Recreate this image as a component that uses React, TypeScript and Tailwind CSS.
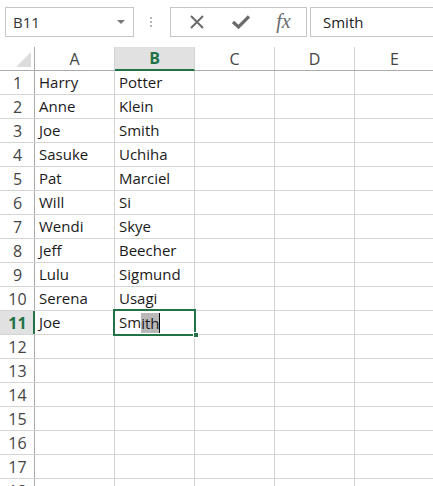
import React from 'react'

const rows: [string, string][] = [
  ['Harry', 'Potter'],
  ['Anne', 'Klein'],
  ['Joe', 'Smith'],
  ['Sasuke', 'Uchiha'],
  ['Pat', 'Marciel'],
  ['Will', 'Si'],
  ['Wendi', 'Skye'],
  ['Jeff', 'Beecher'],
  ['Lulu', 'Sigmund'],
  ['Serena', 'Usagi'],
  ['Joe', 'Smith'],
  ['', ''],
  ['', ''],
  ['', ''],
  ['', ''],
  ['', ''],
  ['', ''],
  ['', ''],
]

const cols = ['A', 'B', 'C', 'D', 'E']

export default function App() {
  return (
    <main
      className="w-[433px] h-[486px] overflow-hidden bg-white text-[15px] text-[#222]"
      style={{ fontFamily: '"Open Sans", "Noto Sans", sans-serif' }}
    >
      {/* Formula bar */}
      <div className="flex h-[47px] pt-[7px] pl-[5px]">
        <div className="flex items-center justify-between w-[129px] h-[30px] border border-[#c6c6c6] pl-[7px] pr-[8px]">
          <span className="text-[#333]">B11</span>
          <svg width="8" height="5" viewBox="0 0 8 5">
            <path d="M0 0 L8 0 L4 4 Z" fill="#7a7a7a" />
          </svg>
        </div>
        <div className="flex w-[36px] justify-center items-center h-[30px]">
          <div className="flex flex-col gap-[2px] -ml-[2px]">
            <span className="block w-[2px] h-[2px] bg-[#b4b4b4]" />
            <span className="block w-[2px] h-[2px] bg-[#b4b4b4]" />
            <span className="block w-[2px] h-[2px] bg-[#b4b4b4]" />
          </div>
        </div>
        <div className="flex items-center w-[137px] h-[30px] border border-[#c6c6c6]">
          <div className="w-[50px] flex justify-center pl-[2px]">
            <svg width="14" height="14" viewBox="0 0 14 14">
              <path d="M1 1 L13 13 M13 1 L1 13" stroke="#6b6b6b" strokeWidth="2" />
            </svg>
          </div>
          <div className="w-[40px] flex justify-center">
            <svg width="18" height="14" viewBox="0 0 18 14">
              <path d="M1 7 L6.5 12 L17 1.5" stroke="#6b6b6b" strokeWidth="3.2" fill="none" />
            </svg>
          </div>
          <div className="w-[45px] flex justify-center">
            <span
              className="italic text-[20px] text-[#6b6b6b] leading-none -mt-[2px]"
              style={{ fontFamily: '"Liberation Serif", serif' }}
            >
              fx
            </span>
          </div>
        </div>
        <div className="flex items-center flex-1 h-[30px] border border-r-0 border-[#c6c6c6] ml-[3px] pl-[12px]">
          <span className="text-[#222]">Smith</span>
        </div>
      </div>

      {/* Column headers */}
      <div className="flex h-[24px] border-b border-[#ababab]">
        <div className="relative w-[35px] shrink-0 border-r border-[#ababab]">
          <svg className="absolute right-[3px] bottom-[3px]" width="15" height="15" viewBox="0 0 15 15">
            <path d="M15 0 L15 15 L0 15 Z" fill="#dcdcdc" />
          </svg>
        </div>
        {cols.map((c) =>
          c === 'B' ? (
            <div
              key={c}
              className="w-[80px] shrink-0 flex items-center justify-center bg-[#e1e1e1] border-r border-[#d4d4d4] border-b-2 border-b-[#217346] -mb-[1px] font-bold text-[#217346] text-[16px]"
            >
              {c}
            </div>
          ) : (
            <div
              key={c}
              className="w-[80px] shrink-0 flex items-center justify-center border-r border-[#d4d4d4] text-[#444] text-[16px]"
            >
              {c}
            </div>
          ),
        )}
      </div>

      {/* Rows */}
      {rows.map(([a, b], i) => {
        const sel = i === 10
        return (
          <div key={i} className="flex h-[24px] border-b border-[#d4d4d4]">
            <div
              className={
                sel
                  ? 'w-[35px] shrink-0 flex items-center justify-center bg-[#e1e1e1] border-r-2 border-[#217346] font-bold text-[#217346] text-[16px] pl-[2px]'
                  : 'w-[35px] shrink-0 flex items-center justify-center border-r border-[#ababab] text-[#444] text-[16px] pl-[1px]'
              }
            >
              {i + 1}
            </div>
            <div className="w-[80px] shrink-0 flex items-center border-r border-[#d4d4d4] pl-[4px] text-[#1a1a1a]">
              {a}
            </div>
            {sel ? (
              <div className="relative w-[80px] shrink-0 flex items-center">
                <div className="absolute -left-[2px] -top-[2px] w-[83px] h-[27px] border-2 border-[#217346]" />
                <div className="absolute -right-[4px] -bottom-[4px] w-[6px] h-[6px] bg-[#217346] border border-white" />
                <span className="pl-[4px] text-[#1a1a1a] flex items-center">
                  Sm
                  <span className="bg-[#b9b9b9] leading-[20px]">ith</span>
                  <span className="block w-[1px] h-[20px] bg-black" />
                </span>
              </div>
            ) : (
              <div className="w-[80px] shrink-0 flex items-center border-r border-[#d4d4d4] pl-[4px] text-[#1a1a1a]">
                {b}
              </div>
            )}
            <div className="w-[80px] shrink-0 border-r border-[#d4d4d4]" />
            <div className="w-[80px] shrink-0 border-r border-[#d4d4d4]" />
            <div className="flex-1" />
          </div>
        )
      })}
    </main>
  )
}
